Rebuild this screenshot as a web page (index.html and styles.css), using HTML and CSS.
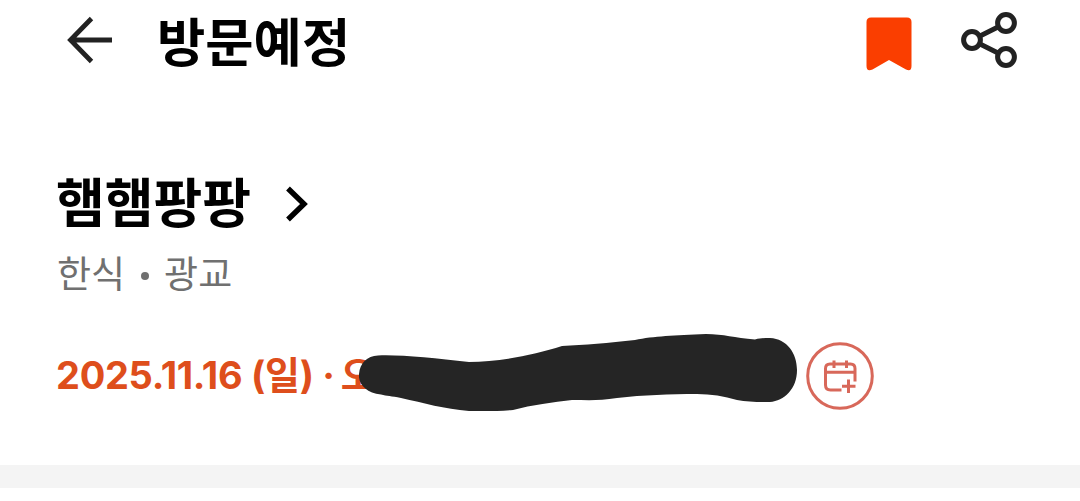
FILE: index.html
```html
<!DOCTYPE html>
<html lang="ko">
<head>
  <meta charset="UTF-8" />
  <meta name="viewport" content="width=device-width, initial-scale=1.0" />
  <title>방문예정</title>
  <link rel="stylesheet" href="styles.css">
</head>
<body>
  <header class="topbar">
    <svg class="icon-back" width="46" height="48" viewBox="0 0 46 48" fill="none" stroke="#222" stroke-width="4.8">
      <path d="M45 24H4M24.500 2.500L3.500 24l21 21.500" />
    </svg>
    <h1 class="topbar-title">방문예정</h1>
    <svg class="icon-bookmark" width="46" height="54" viewBox="0 0 46 54">
      <path d="M5 0.500H41Q45.500 0.500 45.500 5V49Q45.500 55 40 52.500L23 43 6.500 52.500Q0.500 55 0.500 49V5Q0.500 0.500 5 0.500Z" fill="#fa3e00" />
    </svg>
    <svg class="icon-share" width="56" height="56" viewBox="0 0 56 56" fill="none" stroke="#222" stroke-width="5">
      <circle cx="11" cy="28" r="8.400" />
      <circle cx="45" cy="11" r="8.400" />
      <circle cx="45" cy="45" r="8.400" />
      <path d="M18.500 24.200L37.500 14.700M18.500 31.800L37.500 41.300" />
    </svg>
  </header>

  <main class="visit">
    <h2 class="shop-name">
      <span>햄햄팡팡</span>
      <svg width="22" height="36" viewBox="0 0 22 36" fill="none" stroke="#000" stroke-width="5.4">
        <path d="M2 2.500L18 18 2 33.500" />
      </svg>
    </h2>
    <p class="shop-info"><span>한식</span><i class="dot"></i><span>광교</span></p>
    <div class="visit-date">
      <span class="date-text">2025.11.16 (일) ·<span class="date-time">오</span></span>
      <svg class="marker" width="440" height="80" viewBox="0 0 440 80">
        <path d="M19 24.500C40 23.500 75 27 110 31C140 31 175 24 203 15C225 14 250 12 276 9C295 5 315 4.500 347 3C365 3 375 7 396 8.500C402 7 406 7 411 7C428 8 438 22 438 39C438 58 425 70 411 71C398 71 388 71 378 69C365 65 352 63 338 63C310 63 285 64 258 67C240 70 228 69 213 69C194 71 173 74 154 79C140 80 124 81 110 80C85 78 65 72 42 67C32 65 28 65 22 63.500C7 62 -1 53 0 43C1 32 8 25 19 24.500Z" fill="#252525" />
      </svg>
      <svg class="calendar-btn" width="70" height="70" viewBox="0 0 70 70" fill="none" stroke="#d8685a" stroke-width="3">
        <circle cx="35" cy="35" r="32.300" />
        <path d="M50 40.500V27.500Q50 23 45.500 23H25Q20.500 23 20.500 27.500V44Q20.500 49 25.500 49H36.500M20.500 31.300H50M29 19.500V27M41.500 19.500V27M43.500 38.500V52M37 45.200H50.500" />
      </svg>
    </div>
  </main>
  <div class="divider"></div>
</body>
</html>
```

FILE: styles.css
```css
body {
  margin: 0;
  background-color: #fff;
  color: #000;
  font-family: 'Noto Sans CJK KR', sans-serif;
}
h1, h2, p {
  margin: 0;
}
svg {
  display: block;
  flex-shrink: 0;
}
.topbar {
  display: flex;
  align-items: center;
  height: 80px;
  padding: 0 63px 0 67px;
}
.topbar-title {
  margin-left: 44px;
  padding-bottom: 2px;
  font-size: 52.5px;
  line-height: 76px;
  font-weight: 700;
}
.icon-bookmark {
  margin-left: auto;
  margin-top: 7px;
}
.icon-share {
  margin-left: 49px;
}
.visit {
  padding: 80px 56px 0;
}
.shop-name {
  display: flex;
  align-items: center;
  height: 80px;
  font-size: 53px;
  line-height: 76px;
  font-weight: 700;
}
.shop-name svg {
  margin-left: 35px;
  margin-top: 7px;
}
.shop-info {
  display: flex;
  align-items: center;
  height: 56px;
  margin-top: 4px;
  padding-left: 1px;
  font-size: 37px;
  line-height: 56px;
  color: #707070;
}
.dot {
  width: 8px;
  height: 8px;
  margin: 7px 15px 0 16px;
  border-radius: 50%;
  background-color: #707070;
}
.visit-date {
  position: relative;
  display: flex;
  align-items: center;
  height: 80px;
  margin-top: 36px;
}
.date-text {
  padding-bottom: 2px;
  font-family: Inter, 'Noto Sans CJK KR', sans-serif;
  font-size: 38px;
  font-weight: 700;
  letter-spacing: -0.3px;
  line-height: 56px;
  color: #de4e1c;
  white-space: nowrap;
}
.date-time {
  margin-left: 6px;
}
/* scribble over the reservation time */
.marker {
  position: absolute;
  left: 303px;
  top: -5px;
}
.calendar-btn {
  margin-left: auto;
  margin-right: 149px;
}
.divider {
  height: 23px;
  margin-top: 49px;
  background-color: #f4f4f4;
}
```
